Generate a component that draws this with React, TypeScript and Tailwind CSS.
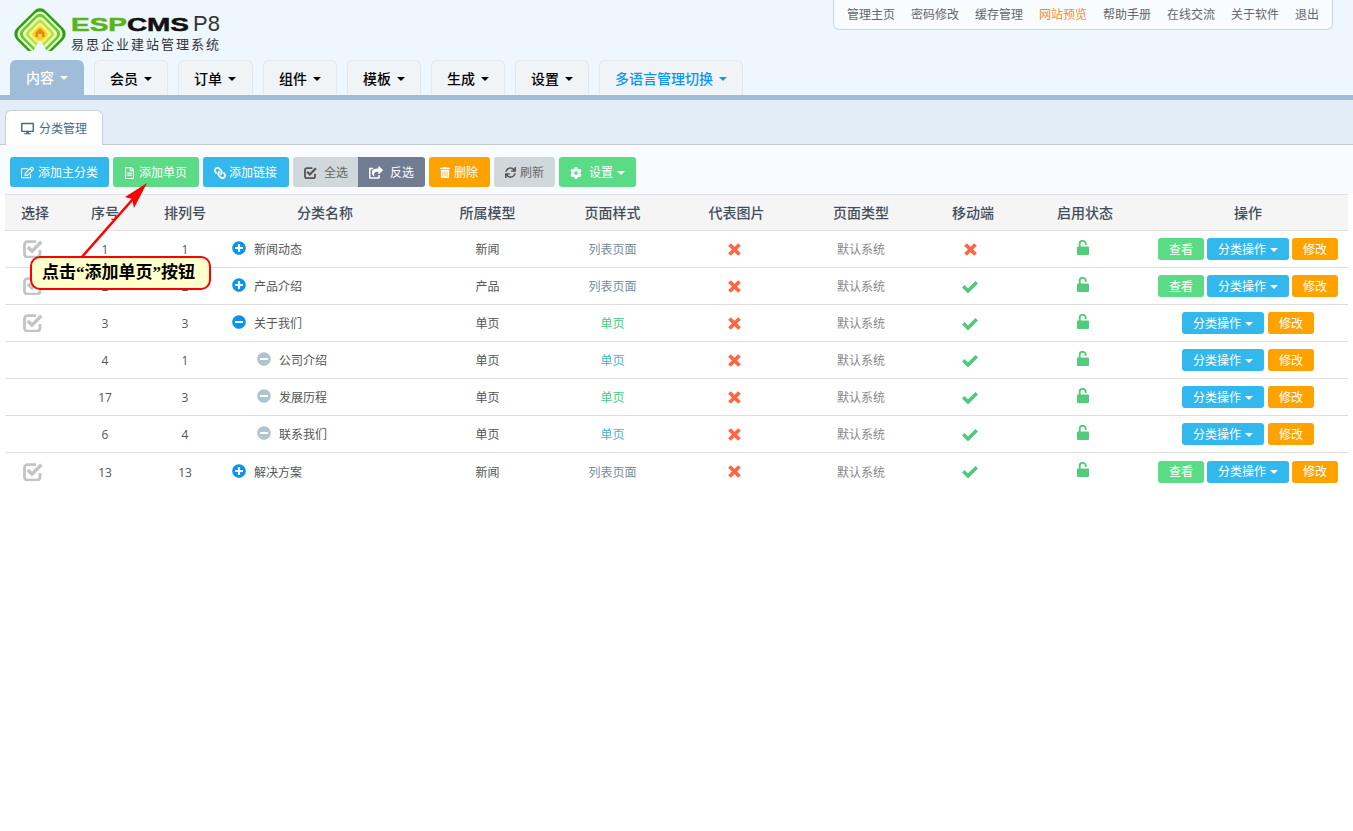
import { FaCog, FaDesktop, FaLink, FaMinusCircle, FaPlusCircle, FaRegEdit, FaRegFileAlt, FaShareSquare, FaSync, FaTrashAlt } from "react-icons/fa";

const topLinks = ["管理主页", "密码修改", "缓存管理", "网站预览", "帮助手册", "在线交流", "关于软件", "退出"];
const navTabs = ["内容", "会员", "订单", "组件", "模板", "生成", "设置", "多语言管理切换"];
const headers = ["选择", "序号", "排列号", "分类名称", "所属模型", "页面样式", "代表图片", "页面类型", "移动端", "启用状态", "操作"];

const rows = [
  { id: 1, sort: 1, name: "新闻动态", level: 0, open: false, model: "新闻", style: "列表页面", styleColor: "text-[#7b8a99]", mobile: false, view: true },
  { id: 2, sort: 2, name: "产品介绍", level: 0, open: false, model: "产品", style: "列表页面", styleColor: "text-[#7b8a99]", mobile: true, view: true },
  { id: 3, sort: 3, name: "关于我们", level: 0, open: true, model: "单页", style: "单页", styleColor: "text-[#45cc7a]", mobile: true, view: false },
  { id: 4, sort: 1, name: "公司介绍", level: 1, open: true, model: "单页", style: "单页", styleColor: "text-[#3fb4cc]", mobile: true, view: false },
  { id: 17, sort: 3, name: "发展历程", level: 1, open: true, model: "单页", style: "单页", styleColor: "text-[#45cc7a]", mobile: true, view: false },
  { id: 6, sort: 4, name: "联系我们", level: 1, open: true, model: "单页", style: "单页", styleColor: "text-[#3fb4cc]", mobile: true, view: false },
  { id: 13, sort: 13, name: "解决方案", level: 0, open: false, model: "新闻", style: "列表页面", styleColor: "text-[#7b8a99]", mobile: true, view: true },
];

const Caret = ({ className = "" }: { className?: string }) => (
  <span className={`inline-block w-0 h-0 border-x-4 border-x-transparent border-t-4 border-t-current ${className}`}></span>
);

// FA4 check-square-o, not in the FA5 set
const CheckSquare = ({ className = "" }: { className?: string }) => (
  <svg viewBox="0 0 20 18" className={className} fill="none" stroke="currentColor">
    <path d="M13 1.6H4.5a3 3 0 0 0-3 3v9.5a3 3 0 0 0 3 3h9.5a3 3 0 0 0 3-3V10" strokeWidth="2.8" />
    <path d="M4.8 7l4.2 4.2L18.4 1.8" strokeWidth="3.4" />
  </svg>
);

// FA4 times and check, heavier than the FA5 ones
const Cross = () => (
  <svg viewBox="0 0 13 13" className="w-[13px] h-[13px] text-[#ff6642]" fill="none" stroke="currentColor" strokeWidth="3.8">
    <path d="M1.5 1.5l10 10M11.5 1.5l-10 10" />
  </svg>
);

const Tick = () => (
  <svg viewBox="0 0 16 13" className="w-[16px] h-[13px] text-[#4fc97a]" fill="none" stroke="currentColor" strokeWidth="3.6">
    <path d="M1.3 6.2l4.7 4.7L14.7 2.200" />
  </svg>
);

const OpenLock = () => (
  <svg viewBox="0 0 12 15" className="w-[12px] h-[15px] text-[#52cc7c]">
    <path d="M2.7 7V3.8a3 3 0 0 1 6 0V5" fill="none" stroke="currentColor" strokeWidth="1.9" />
    <rect x="0" y="6.5" width="12" height="8.5" rx="1" fill="currentColor" />
  </svg>
);

const Logo = () => (
  <svg viewBox="0 0 54 44" className="w-[54px] h-[44px]">
    <defs>
      <clipPath id="logo-cut">
        <path d="M0 0H54V43H34L27 31L20 43H0Z" />
      </clipPath>
    </defs>
    <g clipPath="url(#logo-cut)">
      <g transform="rotate(45 27 26)">
        <rect x="6.5" y="5.5" width="41" height="41" rx="8" fill="#2f9f12" />
        <rect x="9" y="8" width="36" height="36" rx="7" fill="#e9f8cf" />
        <rect x="11" y="10" width="32" height="32" rx="6" fill="#6cc92f" />
        <rect x="13.5" y="12.5" width="27" height="27" rx="5" fill="#eef8b8" />
        <rect x="16" y="15" width="22" height="22" rx="4" fill="#b5e24a" />
        <rect x="18.5" y="17.5" width="17" height="17" rx="3" fill="#fff27a" />
        <rect x="21" y="20" width="12" height="12" rx="2" fill="#fbcf2c" />
      </g>
    </g>
    <path d="M27 20l4.5 4.5V29H29v-3h-4v3h-2.500v-4.500z" fill="#e08a18" />
  </svg>
);

const ToolButton = ({ icon, label, className, gap = "gap-[4px]" }: { icon: React.ReactNode; label: React.ReactNode; className: string; gap?: string }) => (
  <button className={`h-[30px] flex items-center pl-[11px] pt-[1px] ${gap} text-xs ${className}`}>
    {icon}
    {label}
  </button>
);

const SmallButton = ({ className, children }: { className: string; children: React.ReactNode }) => (
  <button className={`h-[22px] pt-[1px] rounded-[3px] text-xs text-white flex items-center justify-center ${className}`}>{children}</button>
);

export default function App() {
  return (
    <div className="relative min-h-screen bg-white text-xs text-[#555] [font-family:'Open_Sans','Noto_Sans_CJK_SC',sans-serif]">
      <header className="bg-[#eef6fe]">
        <div className="h-[60px] flex justify-between items-start">
          <div className="flex pl-[13px] pt-[8px]">
            <Logo />
            <div className="ml-[4px] pt-[3px]">
              <div className="flex items-baseline h-[26px]">
                <div className="w-[122px] text-[19px] leading-[26px] font-bold whitespace-nowrap scale-x-[1.47] origin-left [-webkit-text-stroke:0.5px] [font-family:'Liberation_Sans',sans-serif]">
                  <span className="text-[#57b51c]">ESP</span>
                  <span className="text-[#111]">CMS</span>
                </div>
                <span className="text-[22px] leading-[26px] text-[#333] [font-family:'Liberation_Sans',sans-serif]">P8</span>
              </div>
              <div className="text-[13px] leading-[15px] tracking-[2px] text-[#333] whitespace-nowrap">易思企业建站管理系统</div>
            </div>
          </div>
          <div className="mr-[20px] w-[500px] h-[30px] flex items-center justify-between px-[13px] bg-[#f9fcff] border border-t-0 border-[#c9d7e6] rounded-b-md">
            {topLinks.map((link) => (
              <span key={link} className={link === "网站预览" ? "text-[#ff8a1e]" : "text-[#666]"}>
                {link}
              </span>
            ))}
          </div>
        </div>
        <nav className="h-[35px] flex gap-[10px] pl-[10px] text-sm font-medium">
          {navTabs.map((tab, i) => (
            <div
              key={tab}
              className={`pt-[1px] flex items-center gap-[6px] rounded-t-md ${
                i === 0
                  ? "w-[74px] pl-[16px] bg-[#a0bcd9] text-white"
                  : i === 7
                    ? "w-[144px] pl-[15px] bg-[#f0f4f7] border border-b-0 border-[#e4e8ea] text-[#0b96f5]"
                    : i === 2
                      ? "w-[75px] pl-[15px] bg-[#f0f4f7] border border-b-0 border-[#e4e8ea] text-black"
                      : "w-[74px] pl-[15px] bg-[#f0f4f7] border border-b-0 border-[#e4e8ea] text-black"
              }`}
            >
              {tab}
              <Caret />
            </div>
          ))}
        </nav>
      </header>
      <div className="h-[5px] bg-[#a0bcd9]"></div>
      <div className="h-[45px] pt-[10px] pl-[5px] bg-[#e3edf8] border-b border-[#c8c8c8]">
        <div className="relative w-[98px] h-[35px] flex items-center pl-[15px] pt-[1px] gap-[5px] bg-white border border-b-0 border-[#c8d0d8] rounded-t-md text-[#47698e]">
          <FaDesktop className="w-[13px] h-[13px]" />
          分类管理
        </div>
      </div>

      <div className="h-[49px] pt-[12px] pl-[10px] flex gap-[4px] bg-[#f8fbff]">
        <ToolButton icon={<FaRegEdit className="w-[13px] h-[13px]" />} label="添加主分类" className="w-[99px] bg-[#32b8ec] text-white rounded-[3px]" />
        <ToolButton icon={<FaRegFileAlt className="w-[11px] h-[12px]" />} label="添加单页" className="w-[86px] bg-[#5bdb85] text-white rounded-[3px]" />
        <ToolButton icon={<FaLink className="w-[12px] h-[12px] -scale-x-100" />} label="添加链接" className="w-[86px] bg-[#32b8ec] text-white rounded-[3px]" gap="gap-[3px]" />
        <div className="flex">
          <ToolButton icon={<CheckSquare className="w-[13px] h-[12px] text-[#555]" />} label="全选" className="w-[65px] bg-[#d1d8dc] text-[#666] rounded-l-[3px]" gap="gap-[7px]" />
          <ToolButton icon={<FaShareSquare className="w-[14px] h-[13px]" />} label="反选" className="w-[67px] bg-[#6f7c91] text-white rounded-r-[3px]" gap="gap-[7px]" />
        </div>
        <ToolButton icon={<FaTrashAlt className="w-[10px] h-[11px]" />} label="删除" className="w-[61px] bg-[#fea200] text-white rounded-[3px]" />
        <ToolButton icon={<FaSync className="w-[11px] h-[11px] text-[#555]" />} label="刷新" className="w-[61px] bg-[#d1d8dc] text-[#666] rounded-[3px]" />
        <ToolButton
          icon={<FaCog className="w-[12px] h-[12px]" />}
          label={
            <span className="flex items-center gap-[4px]">
              设置
              <Caret />
            </span>
          }
          className="w-[77px] bg-[#5bdb85] text-white rounded-[3px]"
          gap="gap-[7px]"
        />
      </div>

      <div className="mx-[5px]">
        <div className="grid grid-cols-[60px_80px_80px_200px_125px_125px_123px_126px_98px_126px_200px] h-[37px] items-center text-center text-sm font-medium text-[#444e5a] bg-[#f5f5f5] border-y border-[#e2e2e2]">
          {headers.map((h) => (
            <div key={h}>{h}</div>
          ))}
        </div>
        {rows.map((row, i) => (
          <div
            key={row.id}
            className={`grid grid-cols-[60px_80px_80px_200px_125px_125px_123px_126px_98px_126px_200px] h-[37px] pt-[2px] items-center text-center ${
              i < rows.length - 1 ? "border-b border-[#dedede]" : ""
            }`}
          >
            <div className="flex justify-center">
              {row.level === 0 && <CheckSquare className="w-[20px] h-[18px] -translate-y-[1px] -translate-x-[2px] text-[#c4c4c4]" />}
            </div>
            <div>{row.id}</div>
            <div>{row.sort}</div>
            <div className={`flex items-center gap-[8px] text-left ${row.level === 0 ? "pl-[7px]" : "pl-[32px]"}`}>
              {row.open ? (
                <FaMinusCircle className={`text-sm -translate-y-[2px] ${row.level === 0 ? "text-[#0b93f0]" : "text-[#b0c4d0]"}`} />
              ) : (
                <FaPlusCircle className="text-sm -translate-y-[2px] text-[#0b93f0]" />
              )}
              {row.name}
            </div>
            <div>{row.model}</div>
            <div className={row.styleColor}>{row.style}</div>
            <div className="flex justify-center -translate-x-[2px] -translate-y-[1px]">
              <Cross />
            </div>
            <div className="text-[#888]">默认系统</div>
            <div className="flex justify-center -translate-x-[3px] -translate-y-[1px]">{row.mobile ? <Tick /> : <Cross />}</div>
            <div className="flex justify-center -translate-x-[2px] -translate-y-[3px]">
              <OpenLock />
            </div>
            <div className={`flex justify-center -translate-y-[1px] ${row.view ? "gap-[3px]" : "gap-[4px]"}`}>
              {row.view && <SmallButton className="w-[46px] bg-[#5bdb85]">查看</SmallButton>}
              <SmallButton className="w-[82px] gap-[4px] bg-[#32b8ec]">
                分类操作
                <Caret />
              </SmallButton>
              <SmallButton className="w-[46px] bg-[#fea200]">修改</SmallButton>
            </div>
          </div>
        ))}
      </div>

      {/* annotation over the table */}
      <svg className="absolute left-0 top-0 w-[220px] h-[300px] pointer-events-none" viewBox="0 0 220 300">
        <path d="M81 258L133 199" stroke="#ff0000" strokeWidth="2.5" fill="none" />
        <path d="M147 183L125 197L132 199L134 208Z" fill="#ff0000" />
      </svg>
      <div className="absolute left-[30px] top-[256px] w-[181px] h-[34px] flex items-center pl-[10px] bg-[#ffffcc] border-2 border-[#f00] rounded-[10px] text-[17px] font-bold text-black [font-family:'Liberation_Serif','Noto_Sans_CJK_SC',serif]">
        点击“添加单页”按钮
      </div>
    </div>
  );
}
